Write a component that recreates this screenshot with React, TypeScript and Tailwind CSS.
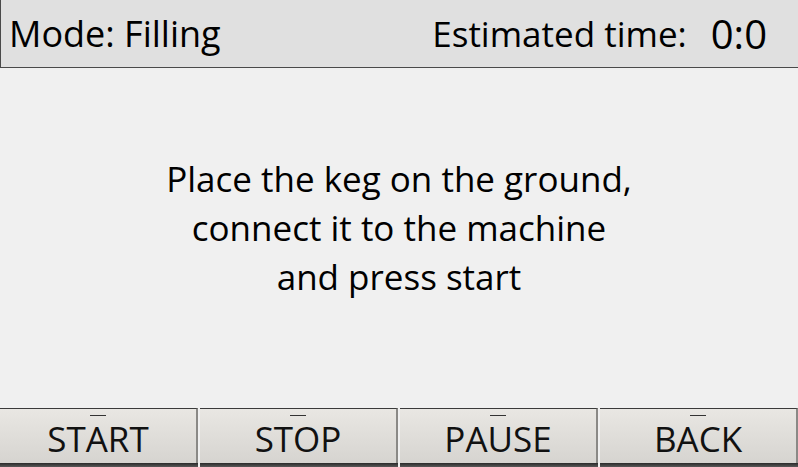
import React from "react";

function Btn({ label }: { label: string }) {
  return (
    <div className="relative h-[59px] flex flex-col">
      <div className="h-[55px] flex flex-col items-center border-t border-[#3a3a3a] border-r-2 border-r-[#8a8986] bg-gradient-to-b from-[#e9e7e3] to-[#d6d4d0] pt-[6px]">
        <div className="h-px w-4 bg-[#333]" />
        <div className="mt-[3px] leading-[40px] text-[35px] text-[#111]">{label}</div>
      </div>
      <div className="h-[4px] bg-gradient-to-b from-[#2a2a2a] to-[#5a5a5a]" />
    </div>
  );
}

export default function App() {
  return (
    <div
      className="w-[798px] h-[467px] bg-[#f0f0f0] flex flex-col overflow-hidden text-black"
      style={{ fontFamily: '"Open Sans", sans-serif' }}
    >
      <div className="h-[68px] shrink-0 flex items-center justify-between bg-[#e0e0e0] border-l border-b border-[#4a4a4a] pl-[8px] pr-[31px]">
        <div className="text-[36px] leading-[60px]">Mode: Filling</div>
        <div className="flex items-center leading-[60px]">
          <span className="text-[35px]">Estimated time:</span>
          <span className="ml-[24px] text-[40px]">0:0</span>
        </div>
      </div>
      <div className="flex-1 flex flex-col items-center pt-[86px] text-[35px] leading-[49px] text-center">
        <div>Place the keg on the ground,</div>
        <div>connect it to the machine</div>
        <div>and press start</div>
      </div>
      <div className="grid grid-cols-4 gap-[2px] shrink-0">
        <Btn label="START" />
        <Btn label="STOP" />
        <Btn label="PAUSE" />
        <Btn label="BACK" />
      </div>
    </div>
  );
}
